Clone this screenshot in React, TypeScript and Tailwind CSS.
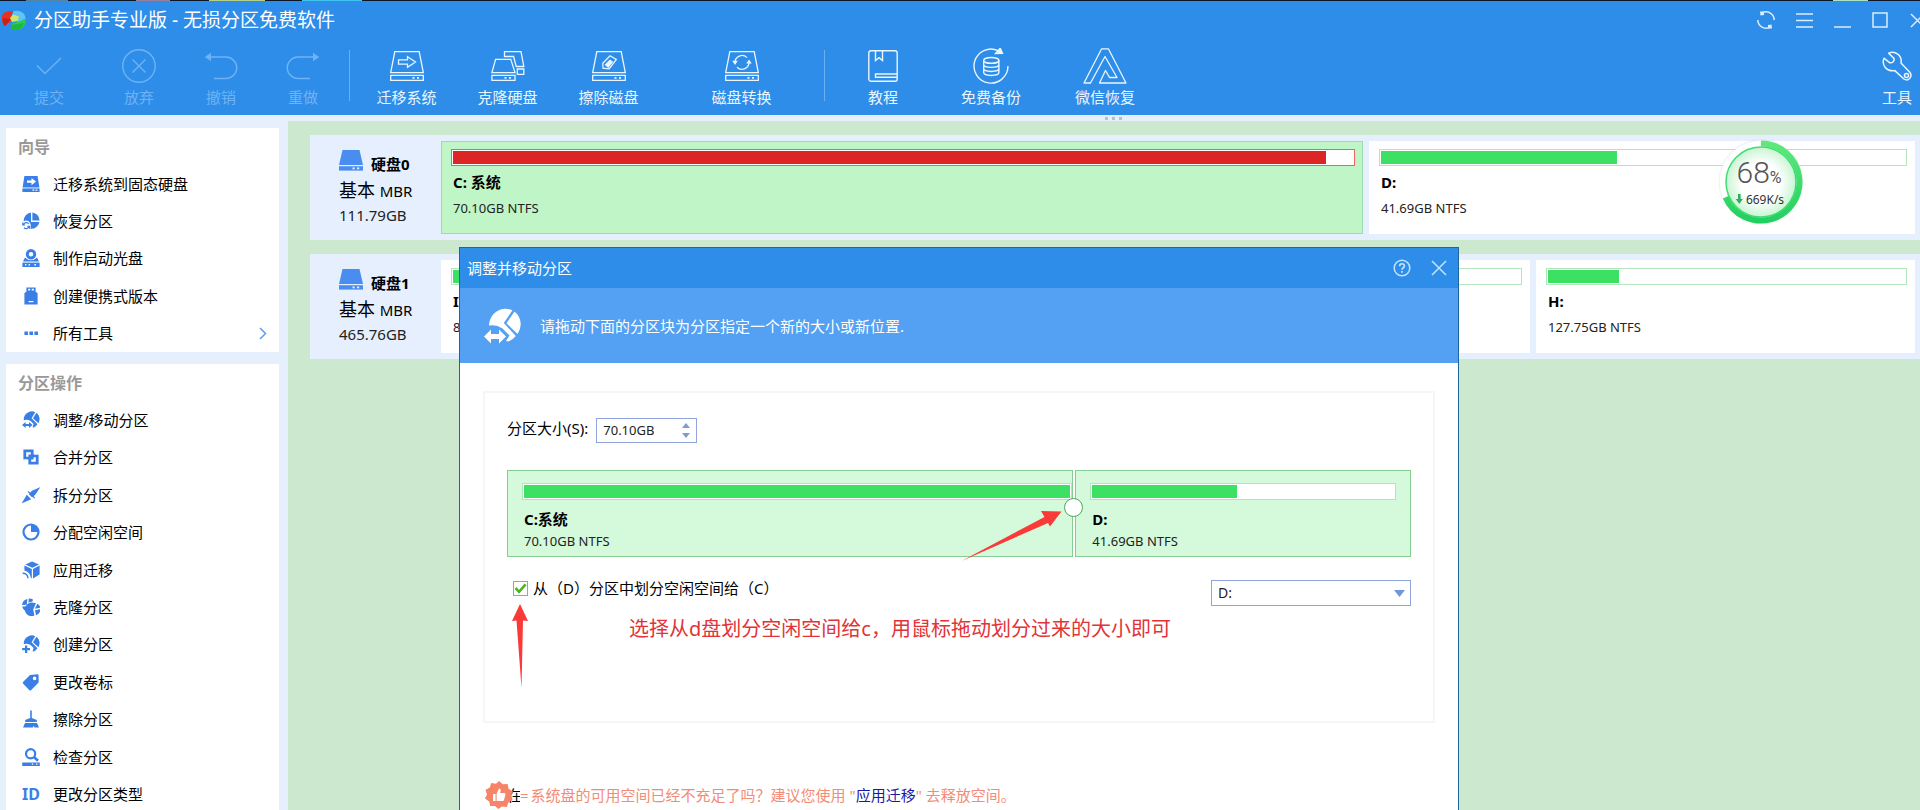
import React, { useState } from 'react';

interface IconProps {
  className?: string;
}

interface ToolProps {
  label: string;
  icon: React.ReactNode;
  className: string;
  disabled?: boolean;
}

interface MenuEntry {
  label: string;
  icon: React.ReactNode;
  more?: boolean;
}

/* ---------- toolbar icons ---------- */

const DiskBase = ({ children }: { children?: React.ReactNode }) => (
  <svg width="34" height="30" viewBox="0 0 34 30" fill="none" stroke="currentColor" strokeWidth="1.3">
    <path d="M4.8 .7H29.2L33.3 21.6H.7Z" />
    <path d="M.7 24.3H33.3V29.4H.7Z" />
    <path d="M22.5 26.9h2M27 26.9h2" strokeWidth="1.6" />
    {children}
  </svg>
);

const CommitIcon = () => (
  <svg width="26" height="18" viewBox="0 0 26 18" fill="none" stroke="currentColor" strokeWidth="1.4">
    <path d="M1 8.5L9 16.5L25 1" />
  </svg>
);

const DiscardIcon = () => (
  <svg width="34" height="34" viewBox="0 0 34 34" fill="none" stroke="currentColor" strokeWidth="1.4">
    <circle cx="17" cy="17" r="16.2" />
    <path d="M10.5 10.5l13 13M23.5 10.5l-13 13" />
  </svg>
);

const UndoIcon = ({ className }: IconProps) => (
  <svg className={className} width="34" height="28" viewBox="0 0 34 28" fill="none" stroke="currentColor" strokeWidth="1.4">
    <path d="M6 5h16a10.7 10.7 0 0 1 0 21.5H10" />
    <path d="M.8 5L7 .8V9.2Z" fill="currentColor" stroke="none" />
  </svg>
);

const MigrateIcon = () => (
  <DiskBase>
    <path d="M8.5 8.8H17.5V5.8L25.5 11L17.5 16.2V13.2H8.5Z" />
  </DiskBase>
);

const CloneIcon = () => (
  <svg width="34" height="30" viewBox="0 0 34 30" fill="none" stroke="currentColor" strokeWidth="1.3">
    <path d="M4.6 8.4H19.8L24 21.6H.9Z" />
    <path d="M.9 24.3H24V29.4H.9Z" />
    <path d="M13.5 26.9h2M18 26.9h2" strokeWidth="1.6" />
    <path d="M13.5 5.5V.7H30L32.8 15.5H25.2L22.6 5.5Z" />
    <path d="M26.3 18H32.8V23.4H26.3Z" />
  </svg>
);

const WipeIcon = () => (
  <DiskBase>
    <path d="M10.8 12.2L18 4.8L24.3 8.4L17.2 17.8L11 17.2Z" />
    <path d="M13.6 13.8L18 9.4L20.2 10.9L16.2 16Z" fill="currentColor" />
  </DiskBase>
);

const ConvertIcon = () => (
  <DiskBase>
    <path d="M10 11.6A7 7 0 0 1 22 6.6M24 10.8A7 7 0 0 1 12 16.2" />
    <path d="M7.2 9.8H12.8L10 14ZM21.2 12.6H26.8L24 8.4Z" fill="currentColor" stroke="none" />
  </DiskBase>
);

const BookIcon = () => (
  <svg width="30" height="32" viewBox="0 0 30 32" fill="none" stroke="currentColor" strokeWidth="1.4">
    <path d="M3 .8H27a2.2 2.2 0 0 1 2.2 2.2V29a2.2 2.2 0 0 1-2.2 2.2H3A2.2 2.2 0 0 1 .8 29V3A2.2 2.2 0 0 1 3 .8Z" />
    <path d="M7.5 .8V10.5L11 7.6L14.5 10.5V.8M29 24H7.5V27.2H29" />
  </svg>
);

const BackupIcon = () => (
  <svg width="36" height="36" viewBox="0 0 36 36" fill="none" stroke="currentColor" strokeWidth="1.4">
    <path d="M35 18A17 17 0 1 1 25 2.6" />
    <path d="M22.5 5.6L29.5 5.4L27.2 .2Z" fill="currentColor" />
    <ellipse cx="18.3" cy="12.4" rx="7.6" ry="2.9" />
    <path d="M10.7 12.4V24.6C10.7 28.4 25.9 28.4 25.9 24.6V12.4M10.7 16.5C10.7 20.3 25.9 20.3 25.9 16.5M10.7 20.6C10.7 24.4 25.9 24.4 25.9 20.6" />
  </svg>
);

const WechatRestoreIcon = () => (
  <svg width="44" height="36" viewBox="0 0 44 36" fill="none" stroke="currentColor" strokeWidth="1.3" strokeLinejoin="round">
    <path d="M18.6 .8H25.4L43 35H16.5L22.5 22.5L26.5 29.5H34L22 8.5L7.5 35H1Z" />
  </svg>
);

const WrenchIcon = () => (
  <svg width="30" height="30" viewBox="0 0 30 30" fill="none" stroke="currentColor" strokeWidth="1.5" strokeLinejoin="round">
    <path d="M2 7.2L7.8 11.8C10.6 12.2 12.6 10 12 7.4L6.6 2.2C13 -.6 20.4 4 19 12L28 21.5C30.8 25.5 26.5 31 22 28L12.8 19.6C5 21 -.8 14.5 2 7.2Z" />
    <circle cx="24.5" cy="24.4" r="2" />
  </svg>
);

/* ---------- side bar icons ---------- */

const Glyph = ({ children }: { children: React.ReactNode }) => (
  <svg className="shrink-0 text-[#3a7fe6]" width="18" height="18" viewBox="0 0 18 18" fill="currentColor">
    {children}
  </svg>
);

const Pie = () => (
  <>
    <path d="M1.8 9.2A8 8 0 0 1 13.2 1.2L9.6 7.2L15.4 13.2A8 8 0 0 1 12 16.4L10.6 16.2L11.6 13L8.6 10Q5 8.2 1.8 9.2Z" />
    <path d="M14.4 1.8A8 8 0 0 1 16.4 12.2L11 7.2Z" />
  </>
);

const wizards: MenuEntry[] = [
  {
    label: '迁移系统到固态硬盘',
    icon: (
      <Glyph>
        <path d="M2.4 1H15.6L17.4 12.4H.6Z" />
        <path d="M.4 13.4H17.6V17H.4Z" />
        <path d="M5 5.4H9.5V3L14 6.6L9.5 10.2V7.8H5Z" fill="#fff" />
        <path d="M10.5 14.6h1.8v1.2h-1.8zM13.6 14.6h1.8v1.2h-1.8z" fill="#fff" />
      </Glyph>
    ),
  },
  {
    label: '恢复分区',
    icon: (
      <Glyph>
        <path d="M9 .6A8.4 8.4 0 0 0 1.6 9.4C5.5 7 9.5 10 9 16.8A8.4 8.4 0 0 0 17.4 10H9Z" />
        <path d="M10.4 .4A8.4 8.4 0 0 1 17.6 8.4H10.4Z" />
        <path d="M1.5 12.5A3 3 0 0 1 6.8 12M7 14.5A3 3 0 0 1 2 15.8M.8 10.6V13H3.2M7.8 17V14.4H5.4" fill="none" stroke="currentColor" strokeWidth="1.2" />
      </Glyph>
    ),
  },
  {
    label: '制作启动光盘',
    icon: (
      <Glyph>
        <path fillRule="evenodd" d="M9 0A5.2 5.2 0 1 1 9 10.4A5.2 5.2 0 1 1 9 0ZM9 3A2.2 2.2 0 1 0 9 7.4A2.2 2.2 0 1 0 9 3Z" />
        <path d="M3 8.6A8 8 0 0 0 15 8.6L17 12.6H1Z" />
        <path d="M.4 13.6H17.6V18H.4Z" />
        <path d="M3 15h1.4v1.4H3zM6.6 15H8v1.4H6.6zM12.4 15H14v1.4h-1.6z" fill="#fff" />
      </Glyph>
    ),
  },
  {
    label: '创建便携式版本',
    icon: (
      <Glyph>
        <path fillRule="evenodd" d="M4.4 .4H13.6V5H4.4ZM6.2 1.8V3.6H8.2V1.8ZM9.8 1.8V3.6H11.8V1.8Z" />
        <path d="M3.6 5H14.4L15.6 6.4V17.6H2.4V6.4Z" />
        <path d="M6.6 14H11.4V15.2H6.6Z" fill="#fff" />
      </Glyph>
    ),
  },
  {
    label: '所有工具',
    more: true,
    icon: (
      <Glyph>
        <path d="M2.4 7.4H6V11H2.4ZM7.4 7.4H11V11H7.4ZM12.4 7.4H16V11H12.4Z" />
      </Glyph>
    ),
  },
];

const operations: MenuEntry[] = [
  {
    label: '调整/移动分区',
    icon: (
      <Glyph>
        <Pie />
        <path d="M0 14L3.6 11V13H7V11L10.6 14L7 17V15H3.6V17Z" />
      </Glyph>
    ),
  },
  {
    label: '合并分区',
    icon: (
      <Glyph>
        <path d="M2.8 2.8H10.2V10.2H2.8Z" fill="none" stroke="currentColor" strokeWidth="2.8" />
        <path d="M7.8 7.8H15.2V15.2H7.8Z" fill="none" stroke="currentColor" strokeWidth="2.8" />
        <path d="M5.4 11.6H2.4M12.6 6.4H15.6" stroke="#fff" strokeWidth=".6" />
      </Glyph>
    ),
  },
  {
    label: '拆分分区',
    icon: (
      <Glyph>
        <path d="M18.5 1L10 4.8L6.8 8L10.2 11.4L13.4 8.4Z" />
        <path d="M6 5.4L12.8 12.2" stroke="currentColor" strokeWidth="1.2" />
        <path d="M4.8 8.8L9.2 13.2L-.5 17.6Z" />
      </Glyph>
    ),
  },
  {
    label: '分配空闲空间',
    icon: (
      <Glyph>
        <path fillRule="evenodd" d="M9 .4A8.6 8.6 0 1 1 9 17.6A8.6 8.6 0 1 1 9 .4ZM9 2.6A6.4 6.4 0 1 0 15.4 9H9Z" />
      </Glyph>
    ),
  },
  {
    label: '应用迁移',
    icon: (
      <Glyph>
        <path d="M10 .4L17 3.4L10.4 6.8L3.4 3.6Z" />
        <path d="M17.6 4.6V13.6L11 17.4V8Z" />
        <path d="M2.4 4.6L9.8 8V17.4L8.6 16.6C8.4 12.8 6 10.2 2.4 9.4Z" />
        <path d="M.6 12.2C4 12.2 5.8 14 6 17.2" fill="none" stroke="currentColor" strokeWidth="1.4" />
      </Glyph>
    ),
  },
  {
    label: '克隆分区',
    icon: (
      <Glyph>
        <path d="M5.4 1A7 7 0 0 0 0 7L4.8 6.8ZM6.8 .6L6.4 4.6L10.4 3.4L11 1.6A7 7 0 0 0 6.8 .6ZM.2 8.4H4.4L5 13.4A7 7 0 0 1 .2 8.4Z" />
        <path d="M11.4 4.8A6.8 6.8 0 1 0 12.4 17.6L11.2 11.6L14 5.2ZM15.4 5.8L12.8 10.8L18.4 9.6A6.8 6.8 0 0 0 15.4 5.8ZM18.6 11L13 12.2L14 17.2A6.8 6.8 0 0 0 18.6 11Z" />
      </Glyph>
    ),
  },
  {
    label: '创建分区',
    icon: (
      <Glyph>
        <Pie />
        <path d="M3 10.4H5.2V13H8V15.2H5.2V18H3V15.2H.2V13H3Z" />
      </Glyph>
    ),
  },
  {
    label: '更改卷标',
    icon: (
      <Glyph>
        <path fillRule="evenodd" d="M8 2L15.4 1.2Q16.6 1.2 16.6 2.4V9.4L9 17.2Q8.2 17.8 7.4 17.2L1 10.6Q.4 9.6 1 9ZM12.6 3.6A1.8 1.8 0 1 0 12.6 7.2A1.8 1.8 0 1 0 12.6 3.6Z" />
      </Glyph>
    ),
  },
  {
    label: '擦除分区',
    icon: (
      <Glyph>
        <path d="M8.2 .4H9.8V8L14.8 10V12H3.2V10L8.2 8Z" />
        <path d="M3 13H15L17 17.4H12.6L11.6 15.8L11 17.4H1Z" />
      </Glyph>
    ),
  },
  {
    label: '检查分区',
    icon: (
      <Glyph>
        <circle cx="8.6" cy="5.8" r="4.6" fill="none" stroke="currentColor" strokeWidth="2.2" />
        <path d="M12 9L16 12.8" stroke="currentColor" strokeWidth="2.6" />
        <path fillRule="evenodd" d="M.2 14.4H17.8V18H.2ZM9.8 15.6V16.8H11.2V15.6ZM14 15.6V16.8H15.4V15.6Z" />
      </Glyph>
    ),
  },
  {
    label: '更改分区类型',
    icon: <span className="w-[18px] shrink-0 text-center text-base font-bold text-[#3a7fe6]">ID</span>,
  },
];

/* ---------- building blocks ---------- */

const Tool: React.FC<ToolProps> = ({ label, icon, className, disabled = false }) => (
  <button
    type="button"
    disabled={disabled}
    className={`flex shrink-0 flex-col items-center gap-[3px] ${disabled ? 'text-[#6db3f5]' : 'text-[#e9f6ff]'} ${className}`}
  >
    <span className="flex h-9 items-center justify-center">{icon}</span>
    <span className="text-[15px] leading-5 whitespace-nowrap">{label}</span>
  </button>
);

const Divider = () => <span className="mt-0.5 h-[51px] w-px shrink-0 bg-[#68aff3]" />;

const SidePanel = ({ title, entries, listClass }: { title: string; entries: MenuEntry[]; listClass: string }) => (
  <section className="shrink-0 bg-white">
    <h2 className="h-[37px] pl-3 text-base leading-[39px] font-bold text-[#999]">{title}</h2>
    <ul className={`grid auto-rows-fr ${listClass}`}>
      {entries.map((entry) => (
        <li key={entry.label} className="flex">
          <a href="#" className="flex flex-1 items-center gap-[13px] pr-3 pl-4 text-[15px] leading-5 text-black">
            {entry.icon}
            {entry.label}
            {entry.more && (
              <svg className="ml-auto text-[#5b9fee]" width="8" height="13" viewBox="0 0 8 13" fill="none" stroke="currentColor" strokeWidth="1.5">
                <path d="M1 1L6.5 6.5L1 12" />
              </svg>
            )}
          </a>
        </li>
      ))}
    </ul>
  </section>
);

const UsageBar = ({ used, full = false }: { used: number; full?: boolean }) => (
  <div className={`h-[17px] border bg-white p-px ${full ? 'border-[#e8675c]' : 'border-[#b4e6be]'}`}>
    <div className={`h-full ${full ? 'bg-[#dc2626]' : 'bg-[#3ce063]'}`} style={{ width: `${used}%` }} />
  </div>
);

interface PartitionProps {
  name: string;
  info: string;
  used: number;
  full?: boolean;
  className: string;
}

const Partition: React.FC<PartitionProps> = ({ name, info, used, full, className }) => (
  <div className={`min-w-0 border pt-[7px] pr-[7px] pl-[9px] ${className}`}>
    <UsageBar used={used} full={full} />
    <p className="mt-[5px] pl-0.5 text-[15px] leading-[22px] font-bold text-black">{name}</p>
    <p className="mt-[5px] pl-0.5 text-[13px] leading-5 text-[#222]">{info}</p>
  </div>
);

const DiskRow = ({ name, size, columns, children }: { name: string; size: string; columns: string; children: React.ReactNode }) => (
  <section className="flex h-[105px] shrink-0 bg-[#e6effe] py-1.5 pr-[5px]">
    <div className="w-[131px] shrink-0 pt-2 pl-[29px] text-black">
      <div className="flex h-6 items-start gap-2">
        <svg className="mt-px shrink-0" width="24" height="21" viewBox="0 0 24 21" fill="#4a8df0">
          <path d="M3.5 0H20.5L24 15H0Z" />
          <path d="M0 16.2H24V20.6H0Z" />
          <path d="M13.5 17.6h2.2v1.6h-2.2zM18 17.6h2.2v1.6H18z" fill="#e6effe" />
        </svg>
        <h3 className="pt-1 text-[15px] leading-[22px] font-bold whitespace-nowrap">{name}</h3>
      </div>
      <p className="mt-[5px] text-lg leading-6 whitespace-nowrap">
        基本 <span className="text-[15px]">MBR</span>
      </p>
      <p className="text-[15px] leading-6 text-[#222]">{size}</p>
    </div>
    <div className={`grid flex-1 gap-1.5 ${columns}`}>{children}</div>
  </section>
);

const SpeedBall = () => (
  <div className="absolute top-[15px] right-[113px] h-[92px] w-[92px]">
    <svg className="absolute inset-0" width="92" height="92" viewBox="0 0 92 92" fill="none">
      <defs>
        <radialGradient id="ball">
          <stop offset="0.55" stopColor="#fff" />
          <stop offset="1" stopColor="#c9f5d3" />
        </radialGradient>
        <linearGradient id="ring" x1="0" y1="0" x2="0" y2="1">
          <stop offset="0" stopColor="#5ee87c" />
          <stop offset="1" stopColor="#22d060" />
        </linearGradient>
      </defs>
      <circle cx="46" cy="46" r="43" fill="#000" opacity="0.03" />
      <circle cx="46" cy="46" r="41.5" fill="#fff" stroke="#ececf0" strokeWidth="0.5" />
      <circle cx="46" cy="46" r="35" fill="url(#ball)" stroke="#3fdc72" strokeWidth="1.5" />
      <path d="M46 7.5A38.5 38.5 0 1 1 10.6 61.2" stroke="url(#ring)" strokeWidth="6" />
      <path d="M23 58h2.6v5h2.2l-3.500 5-3.500-5H23z" fill="#2fae60" />
    </svg>
    <div className="relative flex h-full flex-col items-center pt-[21px] pr-1 text-[#555]">
      <p className="font-[Roboto] text-[30px] leading-8 font-light">
        68<span className="text-base font-normal">%</span>
      </p>
      <p className="pl-3 text-xs leading-5 text-[#333]">669K/s</p>
    </div>
  </div>
);

const ResizeBlock = ({ name, info, children, className }: { name: string; info: string; children: React.ReactNode; className: string }) => (
  <div className={`min-w-0 border border-[#86cd92] bg-[#d5fadb] pt-3 pb-1 ${className}`}>
    {children}
    <p className="mt-2 pl-0.5 text-[15px] leading-[22px] font-bold text-black">{name}</p>
    <p className="pl-0.5 text-[13px] leading-[22px] text-[#222]">{info}</p>
  </div>
);

const ResizeDialog = () => {
  const [size, setSize] = useState('70.10GB');
  const [takeFree, setTakeFree] = useState(true);

  return (
    <div role="dialog" aria-labelledby="dialog-title" className="absolute top-[126px] left-[171px] h-[720px] w-[1000px] border border-[#1d659f] bg-white">
      <div className="flex h-10 items-center bg-[#2e8de8] pr-[11px] pl-[7px] text-white">
        <h2 id="dialog-title" className="text-[15px] leading-5">调整并移动分区</h2>
        <div className="ml-auto flex gap-5 text-[#c4e3ff]">
          <button type="button" aria-label="帮助">
            <svg width="18" height="18" viewBox="0 0 18 18" fill="none" stroke="currentColor" strokeWidth="1.5">
              <circle cx="9" cy="9" r="7.8" />
              <path d="M6.6 7.2C6.6 4 11.4 4 11.4 7C11.4 8.8 9 8.8 9 10.8" strokeWidth="1.7" />
              <path d="M9 12V13.7" strokeWidth="1.8" />
            </svg>
          </button>
          <button type="button" aria-label="关闭">
            <svg width="16" height="16" viewBox="0 0 16 16" fill="none" stroke="currentColor" strokeWidth="1.5">
              <path d="M1 1L15 15M15 1L1 15" />
            </svg>
          </button>
        </div>
      </div>

      <div className="flex h-[75px] items-center gap-[18px] bg-[#54a0f2] pl-6 text-white">
        <svg width="38" height="36" viewBox="0 0 38 36" fill="currentColor">
          <path d="M5 17.5C5.500 5 17 -2.500 28.500 2.200L19.800 15L31.800 28A16.500 16.500 0 0 1 24.500 33.500L22 33L25.500 27.500L18.500 20.500Q12 16 5 17.500Z" />
          <path d="M30.500 3.400A16.500 16.500 0 0 1 33.500 26L22.500 15.200Z" />
          <path d="M0 28.500L7 21.500V26H15V21.500L22 28.500L15 35.500V31H7V35.500Z" />
        </svg>
        <p className="text-[15px] leading-5">请拖动下面的分区块为分区指定一个新的大小或新位置.</p>
      </div>

      <div className="mx-[23px] mt-7 h-[332px] border-2 border-[#f6f6f6] px-[22px] pt-[25px]">
        <div className="flex items-start gap-2">
          <label htmlFor="size" className="text-[15px] leading-5 text-black">分区大小(S):</label>
          <div className="flex h-[25px] w-[101px] items-center border border-[#8fa5dc]">
            <input
              id="size"
              value={size}
              onChange={(e) => setSize(e.target.value)}
              className="min-w-0 flex-1 bg-transparent pl-1.5 text-[13px] text-[#222] outline-none"
            />
            <div className="mr-1.5 flex flex-col gap-[5px] text-[#7f9bd8]">
              <button type="button" aria-label="增大">
                <svg width="8" height="5" viewBox="0 0 8 5" fill="currentColor"><path d="M0 5L4 0L8 5Z" /></svg>
              </button>
              <button type="button" aria-label="减小">
                <svg width="8" height="5" viewBox="0 0 8 5" fill="currentColor"><path d="M0 0L4 5L8 0Z" /></svg>
              </button>
            </div>
          </div>
        </div>

        <div className="relative mt-[27px] grid grid-cols-[567fr_336fr] gap-0.5">
          <ResizeBlock name="C:系统" info="70.10GB NTFS" className="pl-3.5">
            <UsageBar used={100} />
          </ResizeBlock>
          <ResizeBlock name="D:" info="41.69GB NTFS" className="px-3.5">
            <UsageBar used={48} />
          </ResizeBlock>
          <button type="button" aria-label="拖动分区" className="absolute top-7 left-[557px] size-[19px] rounded-full border border-[#4fa35d] bg-white" />
        </div>

        <div className="mt-[23px] flex items-start justify-between pl-1.5">
          <label className="flex items-center gap-[5px] text-[15px] leading-4 text-black">
            <span className="relative size-[15px]">
              <input
                type="checkbox"
                checked={takeFree}
                onChange={(e) => setTakeFree(e.target.checked)}
                className="block size-[15px] appearance-none border border-[#7fa6e0] bg-white"
              />
              {takeFree && (
                <svg className="pointer-events-none absolute inset-0" width="15" height="15" viewBox="0 0 15 15" fill="none" stroke="#4cb81c" strokeWidth="2.6">
                  <path d="M2.5 7L6 10.8L12.6 3.4" />
                </svg>
              )}
            </span>
            从（D）分区中划分空闲空间给（C）
          </label>
          <div className="relative">
            <select aria-label="分区" className="h-[26px] w-[200px] appearance-none border border-[#8fa5dc] bg-white pl-1.5 text-sm text-[#222]">
              <option>D:</option>
            </select>
            <svg className="pointer-events-none absolute top-2.5 right-1.5" width="11" height="7" viewBox="0 0 11 7" fill="#6f97dc">
              <path d="M0 0H11L5.5 7Z" />
            </svg>
          </div>
        </div>
      </div>

      <div className="mt-[58px] flex items-center pl-[25px] text-[15px] leading-7 whitespace-nowrap text-[#f28c78]">
        <svg className="relative" width="28" height="28" viewBox="0 0 28 28" fill="#f58468">
          <path d="M14 0L17.8 3.2L22.6 3L23.6 7.8L28 10.6L26 14.6L27.6 19L23.4 21.4L21.8 26L17 25.4L13.4 28L10 25L5.2 25L4.2 20.4L0 17.6L2 13.4L.4 9L4.8 6.6L6.2 2L11 2.8Z" />
          <path d="M8 13H10.6V20H8ZM11.6 12.8L14 7.4Q16.2 7.6 15.6 10.2L15 12H19.6Q20.8 12.4 20.4 13.8L19 19Q18.6 20 17.6 20H11.6Z" fill="#fff" />
        </svg>
        <span className="-ml-1.5 w-[13px] overflow-hidden text-black">在</span>
        <span>=</span>
        <p className="pl-0.5">
          系统盘的可用空间已经不充足了吗？建议您使用 "
          <a href="#" className="text-[#1a17a8]">应用迁移</a>
          " 去释放空间。
        </p>
      </div>

      {/* red marker notes drawn over the dialog */}
      <svg className="pointer-events-none absolute top-[262px] left-[501px]" width="102" height="54" viewBox="0 0 102 54" fill="#f93a37">
        <path d="M100.500 1.500L80 1L83.500 7L.5 51L87 13L89 16.500Z" />
      </svg>
      <svg className="pointer-events-none absolute top-[356px] left-[51px]" width="18" height="85" viewBox="0 0 18 85" fill="#f93a37">
        <path d="M9 0L17 17L12 16.5L10.5 84L5.5 16.5L1 17Z" />
      </svg>
      <p className="pointer-events-none absolute top-[367px] left-[169px] text-xl leading-7 whitespace-nowrap text-[#e23338]">
        选择从d盘划分空闲空间给c，用鼠标拖动划分过来的大小即可
      </p>
    </div>
  );
};

const Header = () => (
  <header className="shrink-0 bg-[#2e8de8]">
    <div className="flex h-px bg-[#0b1526]">
      <span className="ml-[26px] w-[42px] bg-[#4f86a8]" />
      <span className="ml-[68px] w-[34px] bg-[#9a7f9f]" />
      <span className="ml-[39px] w-14 bg-[#b5cf86]" />
      <span className="ml-[37px] w-[60px] bg-[#3fc4f2]" />
      <span className="mr-[52px] ml-auto w-[35px] bg-[#a9e3c0]" />
    </div>
    <div className="flex h-[38px] items-center overflow-hidden pl-0.5 text-white">
      <svg width="24" height="21" viewBox="0 0 24 21">
        <path d="M11 1.5C16 -1 24 2 23.5 9L16 12L10 7Z" fill="#5fc4f5" />
        <path d="M23.5 9C24.5 17 17 22 9.5 19.5L10 13.5L16 12Z" fill="#2bcf4a" />
        <path d="M9.5 19.5V15L15 14L22 13C20 19 15 21.5 9.5 19.5Z" fill="#1fb83e" />
        <path d="M0 6C1 2 6 .5 11 1.5L9 7L10 10L3 16C.5 14 -.5 10 0 6Z" fill="#e8301f" />
        <path d="M1 8L9 9L3 16C.8 14 .4 11 1 8Z" fill="#c8211a" />
        <path d="M8 8L11 4.5L17 6.5L15.5 11L10 12Z" fill="#c9e86a" />
      </svg>
      <h1 className="pl-2 text-[19px] leading-7 whitespace-nowrap">分区助手专业版 - 无损分区免费软件</h1>
      <div className="-mr-4 ml-auto flex text-[#d9edff]">
        <button type="button" aria-label="刷新" className="flex w-[38px] justify-center">
          <svg width="20" height="20" viewBox="0 0 20 20" fill="none" stroke="currentColor" strokeWidth="1.5">
            <path d="M6.5 2.6A8.2 8.2 0 0 1 18.2 10M13.5 17.4A8.2 8.2 0 0 1 1.8 10" />
            <path d="M4 1.5H8V5L4.5 5.5ZM16 18.5H12V15L15.5 14.5Z" fill="currentColor" stroke="none" />
          </svg>
        </button>
        <button type="button" aria-label="菜单" className="flex w-[38px] items-center justify-center">
          <svg width="17" height="15" viewBox="0 0 17 15" stroke="currentColor" strokeWidth="1.5"><path d="M0 1H17M0 7.5H17M0 14H17" /></svg>
        </button>
        <button type="button" aria-label="最小化" className="flex w-[38px] items-center justify-center">
          <svg width="17" height="15" viewBox="0 0 17 15" stroke="currentColor" strokeWidth="1.5"><path d="M0 14H17" /></svg>
        </button>
        <button type="button" aria-label="最大化" className="flex w-[37px] items-center justify-center">
          <svg width="16" height="16" viewBox="0 0 16 16" fill="none" stroke="currentColor" strokeWidth="1.5"><path d="M1 1H15V15H1Z" /></svg>
        </button>
        <button type="button" aria-label="关闭" className="flex w-[38px] items-center justify-center">
          <svg width="15" height="15" viewBox="0 0 15 15" stroke="currentColor" strokeWidth="1.5"><path d="M1 1L14 14M14 1L1 14" /></svg>
        </button>
      </div>
    </div>
    <nav className="flex pt-[9px] pb-2 pl-[5px]">
      <Tool label="提交" icon={<CommitIcon />} className="w-[88px]" disabled />
      <Tool label="放弃" icon={<DiscardIcon />} className="w-[92px]" disabled />
      <Tool label="撤销" icon={<UndoIcon />} className="w-[72px]" disabled />
      <Tool label="重做" icon={<UndoIcon className="-scale-x-100" />} className="w-[92px]" disabled />
      <Divider />
      <Tool label="迁移系统" icon={<MigrateIcon />} className="ml-1.5 w-[101px]" />
      <Tool label="克隆硬盘" icon={<CloneIcon />} className="w-[101px]" />
      <Tool label="擦除磁盘" icon={<WipeIcon />} className="mr-8 w-[101px]" />
      <Tool label="磁盘转换" icon={<ConvertIcon />} className="mr-8 w-[101px]" />
      <Divider />
      <Tool label="教程" icon={<BookIcon />} className="ml-1 w-[108px]" />
      <Tool label="免费备份" icon={<BackupIcon />} className="w-[108px]" />
      <Tool label="微信恢复" icon={<WechatRestoreIcon />} className="w-[120px]" />
      <Tool label="工具" icon={<WrenchIcon />} className="ml-auto w-[46px]" />
    </nav>
  </header>
);

const App: React.FC = () => (
  <div className="flex h-screen flex-col overflow-hidden bg-[#e6f0fc] font-['Noto_Sans','Noto_Sans_CJK_SC',sans-serif]">
    <Header />
    <div className="flex min-h-0 flex-1">
      <aside className="flex w-[288px] shrink-0 flex-col gap-3 pt-[13px] pr-[9px] pl-1.5">
        <SidePanel title="向导" entries={wizards} listClass="h-[187px]" />
        <SidePanel title="分区操作" entries={operations} listClass="h-[412px]" />
      </aside>

      <div className="flex min-w-0 flex-1 flex-col">
        <div className="flex h-1.5 shrink-0 items-center justify-center gap-1 pl-[18px]">
          <span className="size-[3px] bg-[#b9c0c9]" />
          <span className="size-[3px] bg-[#b9c0c9]" />
          <span className="size-[3px] bg-[#b9c0c9]" />
        </div>
        <main className="relative flex flex-1 flex-col gap-3.5 bg-[#cce8cf] pt-3.5 pl-[22px]">
          <DiskRow name="硬盘0" size="111.79GB" columns="grid-cols-[922fr_546fr]">
            <Partition name="C: 系统" info="70.10GB NTFS" used={97} full className="border-[#9bdcaa] bg-[#c0f5c8]" />
            <Partition name="D:" info="41.69GB NTFS" used={45} className="border-white bg-white" />
          </DiskRow>
          <DiskRow name="硬盘1" size="465.76GB" columns="grid-cols-[1089fr_379fr]">
            <Partition name="I:" info="80.00GB NTFS" used={60} className="border-white bg-white" />
            <Partition name="H:" info="127.75GB NTFS" used={20} className="border-white bg-white" />
          </DiskRow>
          <SpeedBall />
          <ResizeDialog />
        </main>
      </div>
    </div>
  </div>
);

export default App;
